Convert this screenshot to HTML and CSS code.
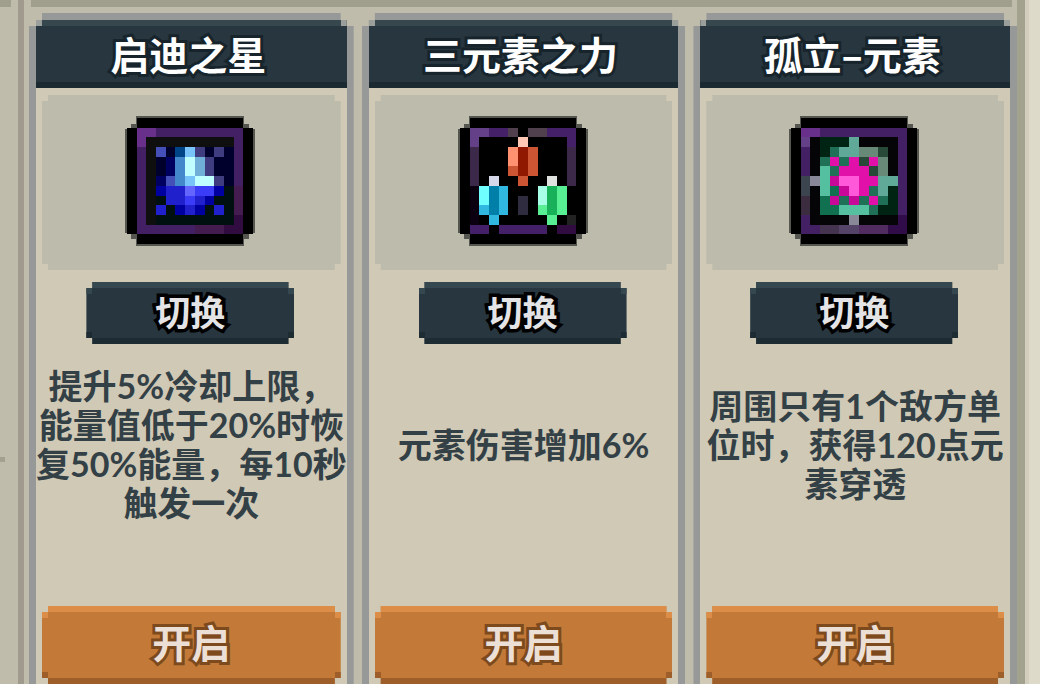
FILE: index.html
```html
<!DOCTYPE html>
<html lang="zh-CN">
<head>
<meta charset="utf-8">
<meta name="viewport" content="width=device-width, initial-scale=1">
<title>元素天赋</title>
<link rel="stylesheet" href="styles.css">
</head>
<body>
<div class="shell">
  <div class="gutter"></div>
  <main class="panel">
    <div class="strip"></div>
    <div class="cards">

      <article class="card">
        <h2 class="title">启迪之星</h2>
        <div class="frame">
          <svg class="icon" viewBox="-0.2 -0.2 13.4 13.4" role="img" aria-label="启迪之星">
            <path fill="#55564f" d="M.9-.2h11.2v.8h.5v.5h.6v10.8h-.6v.6h-.5v.7H.9v-.7H.4v-.6h-.6V1.1h.6V.6h.5z"/>
            <path fill="#000" d="M1 0h11v1h1v11h-1v1H1v-1H0V1h1z"/>
            <path fill="#432063" d="M1 1h11v11H1z"/>
            <path fill="#68308a" d="M1 1h2v1H2v1H1z"/>
            <path fill="#441c50" d="M11 7h1v3h-1zM7 11h3v1H7z"/>
            <path fill="#300c40" d="M11 10h1v2h-2v-1h1z"/>
            <path fill="#0f0f10" d="M2 2h9v9H2z"/>
            <path fill="#00002c" d="M3 3h8v4H3z"/>
            <path fill="#000f10" d="M3 7h8v4H3z"/>
            <g fill="none" stroke-width="1">
              <path stroke="#4450b8" d="M3 3.5h1M4 6.5h1"/>
              <path stroke="#000060" d="M4 4.5h1M4 5.5h1M3 6.5h1"/>
              <path stroke="#004488" d="M5 3.5h1"/>
              <path stroke="#78c4fa" d="M6 3.5h1M6 6.5h1"/>
              <path stroke="#403c80" d="M7 3.5h1M9 3.5h1M8 4.5h1M8 5.5h1M9 6.5h1"/>
              <path stroke="#4488cc" d="M5 4.5h1M5 5.5h1M5 6.5h1"/>
              <path stroke="#c0ffff" d="M6 4.5h1M6 5.5h1M7 6.5h2"/>
              <path stroke="#70b0d8" d="M7 4.5h1M7 5.5h1"/>
              <path stroke="#0000a0" d="M3 7.5h1M9 7.5h1M8 8.5h1M5 9.5h1M7 9.5h1"/>
              <path stroke="#2020cc" d="M4 7.5h2M4 8.5h2M7 8.5h1M3 9.5h1M6 9.5h1M9 9.5h1"/>
              <path stroke="#6464ff" d="M6 7.5h1"/>
              <path stroke="#3a3cf8" d="M7 7.5h2M6 8.5h1"/>
            </g>
          </svg>
        </div>
        <button class="switch" type="button">切换</button>
        <p class="desc">提升5%冷却上限，<br>能量值低于20%时恢<br>复50%能量，每10秒<br>触发一次</p>
        <button class="open" type="button">开启</button>
      </article>

      <article class="card">
        <h2 class="title">三元素之力</h2>
        <div class="frame">
          <svg class="icon" viewBox="-0.2 -0.2 13.4 13.4" role="img" aria-label="三元素之力">
            <path fill="#55564f" d="M.9-.2h11.2v.8h.5v.5h.6v10.8h-.6v.6h-.5v.7H.9v-.7H.4v-.6h-.6V1.1h.6V.6h.5z"/>
            <path fill="#000" d="M1 0h11v1h1v11h-1v1H1v-1H0V1h1z"/>
            <g fill="none" stroke-width="1">
              <path stroke="#644088" d="M1 1.5h2M1 2.5h1"/>
              <path stroke="#432068" d="M3 1.5h2M9 1.5h3M11 2.5h1M1 11.5h2M4 11.5h5"/>
              <path stroke="#50404e" d="M5 1.5h1M7 1.5h2"/>
              <path stroke="#300c40" d="M10 11.5h2"/>
              <path stroke="#222222" d="M11 10.5h1"/>
              <path stroke="#ffc8b4" d="M6 2.5h1"/>
              <path stroke="#ff9070" d="M5 3.5h1M5 4.5h1"/>
              <path stroke="#cc5634" d="M5 5.5h1M6 6.5h1M7 3.5h1M7 4.5h1M7 5.5h1"/>
              <path stroke="#901800" d="M6 3.5h1M6 4.5h1M6 5.5h1"/>
              <path stroke="#d4d8e8" d="M3 6.5h1"/>
              <path stroke="#70ffff" d="M2 7.5h1M2 8.5h1"/>
              <path stroke="#0080a8" d="M3 7.5h1M3 8.5h1M3 9.5h1"/>
              <path stroke="#30b8e0" d="M2 9.5h1M4 7.5h1M4 8.5h1M4 9.5h1M3 10.5h1"/>
              <path stroke="#e0e2e0" d="M9 6.5h1"/>
              <path stroke="#a8ffe8" d="M8 7.5h1M8 8.5h1"/>
              <path stroke="#18b058" d="M9 7.5h1M9 8.5h1M9 9.5h1"/>
              <path stroke="#58ee94" d="M8 9.5h1M10 7.5h1M10 8.5h1M10 9.5h1M9 10.5h1"/>
            </g>
            <path fill="#3c2848" d="M1 3h1v4H1zM11 3h1v4h-1z"/>
            <path fill="#0a0010" d="M1 7h1v4H1z"/>
            <path fill="#302c40" d="M6 8h1v2H6z"/>
          </svg>
        </div>
        <button class="switch" type="button">切换</button>
        <p class="desc">元素伤害增加6%</p>
        <button class="open" type="button">开启</button>
      </article>

      <article class="card">
        <h2 class="title">孤立–元素</h2>
        <div class="frame">
          <svg class="icon" viewBox="-0.2 -0.2 13.4 13.4" role="img" aria-label="孤立–元素">
            <path fill="#55564f" d="M.9-.2h11.2v.8h.5v.5h.6v10.8h-.6v.6h-.5v.7H.9v-.7H.4v-.6h-.6V1.1h.6V.6h.5z"/>
            <path fill="#000" d="M1 0h11v1h1v11h-1v1H1v-1H0V1h1z"/>
            <path fill="#432063" d="M1 1h11v11H1z"/>
            <path fill="#68308a" d="M1 1h2v1H1z"/>
            <path fill="#644088" d="M1 2h1v1H1z"/>
            <path fill="#3c4450" d="M1 6h1v2H1z"/>
            <path fill="#3c2c40" d="M1 8h1v2H1z"/>
            <path fill="#443450" d="M3 11h2v1H3z"/>
            <path fill="#544468" d="M5 11h2v1H5z"/>
            <path fill="#502c60" d="M7 11h3v1H7z"/>
            <path fill="#300c48" d="M11 10h1v2h-2v-1h1z"/>
            <path fill="#050406" d="M2 2h9v9H2z"/>
            <path fill="#002414" d="M3 2h3v2H3zM9 7h2v3H9z"/>
            <g fill="none" stroke-width="1">
              <path stroke="#60a898" d="M6 2.5h1M5 3.5h2M9 6.5h2M9 7.5h1"/>
              <path stroke="#888898" d="M2 6.5h1M6 10.5h1"/>
              <path stroke="#688878" d="M7 3.5h2M9 4.5h1M9 5.5h1"/>
              <path stroke="#284838" d="M9 3.5h1M7 4.5h1M8 5.5h1"/>
              <path stroke="#207058" d="M4 3.5h1M3 4.5h1M5 4.5h1M4 5.5h1M8 7.5h1M5 8.5h1M7 8.5h1M9 8.5h1M8 9.5h1"/>
              <path stroke="#107050" d="M4 7.5h1M3 8.5h1M3 9.5h2"/>
              <path stroke="#54c0a0" d="M3 5.5h1M3 6.5h1M3 7.5h1M5 9.5h3"/>
              <path stroke="#e010a8" d="M4 4.5h1M6 4.5h1M8 4.5h1M5 5.5h3M7 6.5h2M7 7.5h1M8 8.5h1"/>
              <path stroke="#c80898" d="M4 6.5h1M5 7.5h1M4 8.5h1M6 8.5h1"/>
              <path stroke="#ff58d8" d="M5 6.5h2M6 7.5h1"/>
            </g>
          </svg>
        </div>
        <button class="switch" type="button">切换</button>
        <p class="desc">周围只有1个敌方单<br>位时，获得120点元<br>素穿透</p>
        <button class="open" type="button">开启</button>
      </article>

    </div>
  </main>
  <div class="edge"></div>
</div>
</body>
</html>
```

FILE: styles.css
```css
* {
  box-sizing: border-box;
}

body {
  margin: 0;
  background: #bfbcab;
  font-family: "Lato", "Noto Sans CJK SC", sans-serif;
}

.shell {
  display: flex;
  height: 100vh;
  min-height: 684px;
  overflow: hidden;
}

.gutter {
  flex: 0 0 18px;
  background:
    linear-gradient(#a09f8e, #a09f8e) 0 0 / 11px 7px no-repeat,
    linear-gradient(#a3a090, #a3a090) 0 457px / 5px 5px no-repeat;
}

.panel {
  flex: 1;
  display: flex;
  flex-direction: column;
  padding-left: 5px;
  border-left: 6px solid #a09a8e;
  border-right: 8px solid #a2a28f;
}

.strip {
  flex: 0 0 7px;
  margin: 0 5px 6px 2px;
  background: #a09f8e;
}

.edge {
  flex: 0 0 15px;
  background: #dedaca;
  border-left: 4px solid #d3cdbd;
}

.cards {
  flex: 1;
  display: grid;
  grid-template-columns: repeat(3, 1fr);
  gap: 8px;
}

.card {
  display: flex;
  flex-direction: column;
  border: 7px solid #969997;
  border-bottom: 0;
  background: #d0c9b5;
  clip-path: polygon(
    0 13px, 7px 13px, 7px 7px, 13px 7px, 13px 0,
    calc(100% - 13px) 0, calc(100% - 13px) 7px, calc(100% - 7px) 7px,
    calc(100% - 7px) 13px, 100% 13px, 100% 100%, 0 100%);
}

.title {
  margin: 0;
  height: 68px;
  padding-right: 6px;
  color: #fff;
  font-family: "Noto Sans CJK SC", sans-serif;
  font-size: 39px;
  line-height: 66px;
  font-weight: 700;
  text-align: center;
  -webkit-text-stroke: 6px #17242b;
  stroke-linejoin: round;
  paint-order: stroke fill;
  background:
    linear-gradient(#9a9f9b, #9a9f9b) 0 0 / 6px 6px no-repeat,
    linear-gradient(#9a9f9b, #9a9f9b) 100% 0 / 6px 6px no-repeat,
    linear-gradient(#36484d, #36484d) 0 0 / 100% 6px no-repeat,
    linear-gradient(#1b2a31, #1b2a31) 0 100% / 100% 6px no-repeat,
    #27363f;
}

.frame,
.switch,
.open {
  clip-path: polygon(
    0 6px, 6px 6px, 6px 0,
    calc(100% - 6px) 0, calc(100% - 6px) 6px, 100% 6px,
    100% calc(100% - 6px), calc(100% - 6px) calc(100% - 6px), calc(100% - 6px) 100%,
    6px 100%, 6px calc(100% - 6px), 0 calc(100% - 6px));
}

.frame {
  display: flex;
  justify-content: center;
  margin: 7px 6px 0;
  padding: 21px 2px 24px 0;
  background: #bdbbab;
}

.icon {
  display: block;
  width: 130px;
  height: 130px;
  shape-rendering: crispEdges;
}

.switch,
.open {
  border: 0;
  padding: 0;
  font-family: inherit;
  font-weight: 700;
  stroke-linejoin: round;
  paint-order: stroke fill;
  cursor: pointer;
}

.switch {
  align-self: center;
  width: 208px;
  height: 62px;
  margin: 12px 2px 0 0;
  padding-bottom: 2px;
  color: #e4e4e6;
  font-size: 35px;
  line-height: 60px;
  -webkit-text-stroke: 7px #000;
  background:
    linear-gradient(#36484f, #36484f) 0 0 / 100% 6px no-repeat,
    linear-gradient(#36484f, #36484f) 0 6px / 6px 6px no-repeat,
    linear-gradient(#36484f, #36484f) 100% 6px / 6px 6px no-repeat,
    linear-gradient(#1d2c33, #1d2c33) 0 100% / 100% 6px no-repeat,
    linear-gradient(#1d2c33, #1d2c33) 0 50px / 6px 6px no-repeat,
    linear-gradient(#1d2c33, #1d2c33) 100% 50px / 6px 6px no-repeat,
    #27363f;
}

.desc {
  display: flex;
  flex-direction: column;
  justify-content: center;
  min-height: 200px;
  margin: 0;
  color: #334046;
  font-size: 34px;
  line-height: 39px;
  font-weight: 700;
  text-align: center;
  white-space: nowrap;
}

.open {
  height: 78px;
  margin: 62px 6px 0;
  padding-bottom: 4px;
  color: #ecdfd6;
  font-size: 39px;
  line-height: 74px;
  -webkit-text-stroke: 6px #7c4a1d;
  background:
    linear-gradient(#dc8e48, #dc8e48) 0 0 / 100% 6px no-repeat,
    linear-gradient(#dc8e48, #dc8e48) 0 6px / 6px 6px no-repeat,
    linear-gradient(#dc8e48, #dc8e48) 100% 6px / 6px 6px no-repeat,
    linear-gradient(#9d5e29, #9d5e29) 0 100% / 100% 6px no-repeat,
    linear-gradient(#9d5e29, #9d5e29) 0 66px / 6px 6px no-repeat,
    linear-gradient(#9d5e29, #9d5e29) 100% 66px / 6px 6px no-repeat,
    #c37a38;
}
```
